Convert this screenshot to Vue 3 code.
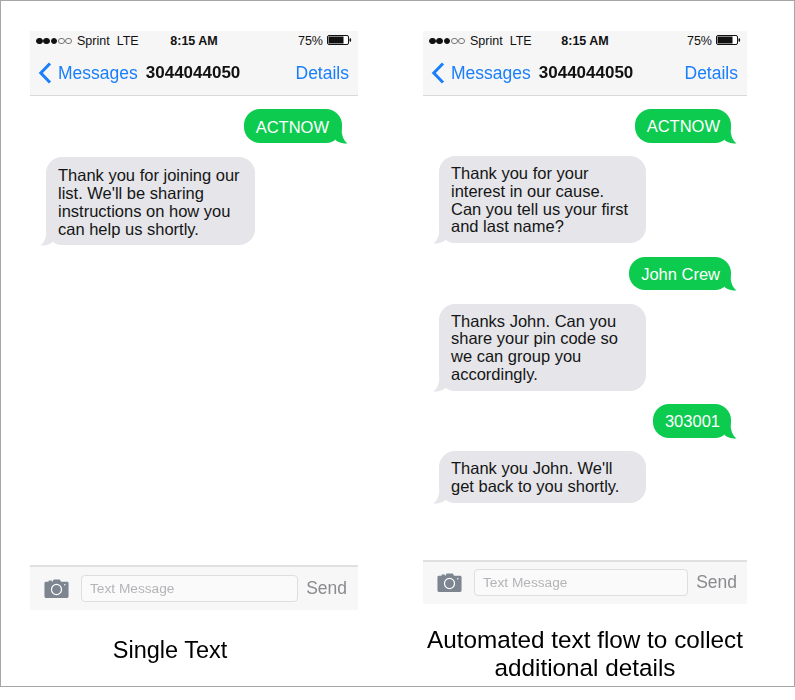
<script setup>
const phones = [
  {
    id: 'single',
    caption: ['Single Text'],
    messages: [
      { id: 1, sent: true, lines: ['ACTNOW'] },
      { id: 2, sent: false, lines: ['Thank you for joining our', "list. We'll be sharing", 'instructions on how you', 'can help us shortly.'] }
    ]
  },
  {
    id: 'flow',
    caption: ['Automated text flow to collect', 'additional details'],
    messages: [
      { id: 1, sent: true, lines: ['ACTNOW'] },
      { id: 2, sent: false, lines: ['Thank you for your', 'interest in our cause.', 'Can you tell us your first', 'and last name?'] },
      { id: 3, sent: true, lines: ['John Crew'] },
      { id: 4, sent: false, lines: ['Thanks John. Can you', 'share your pin code so', 'we can group you', 'accordingly.'] },
      { id: 5, sent: true, lines: ['303001'] },
      { id: 6, sent: false, lines: ['Thank you John. We\'ll', 'get back to you shortly.'] }
    ]
  }
]
</script>

<template>
  <div class="frame">
    <section v-for="phone in phones" :key="phone.id" class="column" :class="phone.id">
      <div class="phone">
        <header class="top">
          <div class="status">
            <div class="carrier">
              <span class="signal">
                <i v-for="n in 5" :key="n" :class="{ on: n < 4 }"></i>
              </span>
              <span>Sprint</span>
              <span class="lte">LTE</span>
            </div>
            <b class="time">8:15 AM</b>
            <div class="power">
              <span>75%</span>
              <svg width="25" height="10" viewBox="0 0 25 10">
                <rect x="0.5" y="0.5" width="21" height="9" rx="1.5" fill="#fff" stroke="#111" />
                <rect x="1.5" y="1.5" width="15" height="7" fill="#111" />
                <rect x="22.5" y="3.2" width="1.6" height="3.6" rx="0.8" fill="#111" />
              </svg>
            </div>
          </div>
          <nav class="nav">
            <svg class="chev" width="14" height="22" viewBox="0 0 14 22">
              <path d="M12 1.5 L2.8 11 L12 20.5" fill="none" stroke="#1a7ffa" stroke-width="3" />
            </svg>
            <span class="link">Messages</span>
            <b class="number">3044044050</b>
            <span class="link details">Details</span>
          </nav>
        </header>

        <div class="thread">
          <div v-for="msg in phone.messages" :key="msg.id" class="row" :class="msg.sent ? 'out' : 'in'">
            <div class="bubble">
              <div v-for="line in msg.lines" :key="line">{{ line }}</div>
              <svg class="tail" width="14" height="16" viewBox="0 0 14 16">
                <path v-if="msg.sent" d="M0 0 L7.5 0 C7.5 6 9 12 13.5 15.5 C10 15.5 5 15 2 12.5 Z" fill="#0ccb4f" />
                <path v-else d="M14 0 L6.5 0 C6.5 6 5 12 0.5 15.5 C4 15.5 9 15 12 12.5 Z" fill="#e5e5ea" />
              </svg>
            </div>
          </div>
        </div>

        <footer class="composer">
          <svg class="camera" width="25" height="19" viewBox="0 0 27 20" preserveAspectRatio="none">
            <path d="M5 3 L5 1.6 L8.5 1.6 L8.5 3 L9 3 L10.5 0.5 L17 0.5 L18.5 3 L25 3 Q26.5 3 26.5 4.5 L26.5 18.5 Q26.5 20 25 20 L2 20 Q0.5 20 0.5 18.5 L0.5 4.5 Q0.5 3 2 3 Z" fill="#7d8590" />
            <circle cx="13.5" cy="11" r="5.4" fill="none" stroke="#fff" stroke-width="1.3" />
            <circle cx="22.5" cy="6" r="0.8" fill="#fff" />
          </svg>
          <div class="field">Text Message</div>
          <span class="send">Send</span>
        </footer>
      </div>
      <p class="caption">
        <span v-for="line in phone.caption" :key="line">{{ line }}</span>
      </p>
    </section>
  </div>
</template>

<style scoped>
.frame {
  box-sizing: border-box;
  width: 795px;
  height: 687px;
  border: 1px solid #a6a6a6;
  display: flex;
  gap: 65px;
  padding: 30px 0 0 29px;
  font-family: "Liberation Sans", Arial, sans-serif;
  color: #111;
  background: #fff;
  overflow: hidden;
}

.column.single {
  width: 328px;
}

.column.flow {
  width: 324px;
}

.phone {
  display: flex;
  flex-direction: column;
  filter: blur(0.3px);
}

.single .phone {
  height: 579px;
}

.flow .phone {
  height: 573px;
}

.top {
  background: #f6f6f7;
  border-bottom: 1px solid #d9d9d9;
  height: 64px;
  flex: none;
}

.status {
  display: grid;
  grid-template-columns: 1fr auto 1fr;
  align-items: center;
  height: 20px;
  padding: 0 6px 0 6px;
  font-size: 12.5px;
}

.carrier {
  display: flex;
  align-items: center;
  gap: 5px;
}

.signal {
  display: flex;
  gap: 0.75px;
}

.signal i {
  box-sizing: border-box;
  width: 6.6px;
  height: 6.6px;
  border-radius: 50%;
  border: 1px solid #777;
}

.signal i.on {
  background: #111;
  border-color: #111;
}

.lte {
  margin-left: 2px;
}

.time {
  font-size: 12.5px;
}

.power {
  display: flex;
  align-items: center;
  justify-content: flex-end;
  gap: 4px;
}

.power svg {
  margin-top: -3px;
}

.nav {
  display: flex;
  align-items: center;
  height: 44px;
  padding: 0 9px 0 8px;
  font-size: 17.5px;
}

.chev {
  margin-right: 6px;
}

.link {
  color: #1a7ffa;
}

.number {
  margin-left: 8px;
  font-size: 17px;
}

.details {
  margin-left: auto;
}

.thread {
  flex: 1;
  display: flex;
  flex-direction: column;
  gap: 14px;
  padding-top: 13px;
}

.flow .thread {
  gap: 13.5px;
}

.row {
  display: flex;
}

.row.out {
  justify-content: flex-end;
  padding-right: 16px;
}

.row.in {
  padding-left: 16px;
}

.bubble {
  position: relative;
  font-size: 16.5px;
  line-height: 18px;
  border-radius: 16px;
}

.flow .bubble {
  line-height: 17.7px;
}

.out .bubble {
  background: #0ccb4f;
  color: #fff;
  padding: 9px 13px 7px 12px;
}

.flow .out .bubble {
  padding-right: 11px;
}

.in .bubble {
  width: 209px;
  box-sizing: border-box;
  background: #e5e5ea;
  padding: 9px 12px 7px;
  color: #151515;
}

.flow .in .bubble {
  width: 207px;
}

.tail {
  position: absolute;
  bottom: -1px;
}

.out .tail {
  right: -6px;
}

.in .tail {
  left: -6px;
}

.composer {
  flex: none;
  height: 45px;
  box-sizing: border-box;
  display: flex;
  align-items: center;
  background: #f7f7f7;
  border-top: 2px solid #e0e0e0;
  padding: 0 11px 1px 14px;
}

.flow .composer {
  height: 44px;
  padding-right: 10px;
}

.camera {
  flex: none;
  margin-right: 12px;
}

.field {
  flex: 1;
  box-sizing: border-box;
  height: 27px;
  line-height: 25px;
  border: 1px solid #dedede;
  border-radius: 4px;
  background: #fafafa;
  color: #b4b4b8;
  font-size: 13.7px;
  padding-left: 8px;
}

.send {
  margin-left: 8px;
  font-size: 17.5px;
  color: #8a8a8f;
}

.caption {
  margin: 0;
  font-size: 23.5px;
  line-height: 28px;
  color: #000;
  text-align: center;
  filter: blur(0.3px);
}

.caption span {
  display: block;
}

.single .caption {
  padding: 26px 48px 0 0;
}

.flow .caption {
  font-size: 24.3px;
  padding-top: 22px;
}
</style>
